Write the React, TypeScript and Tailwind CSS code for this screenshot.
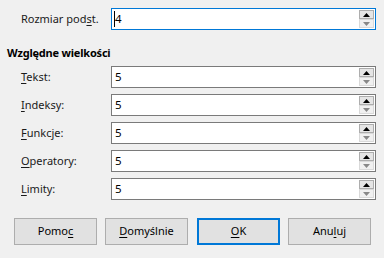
const FONT = { fontFamily: '"Noto Sans", "Open Sans", sans-serif' }

function Mn({ children }: { children: string }) {
  return <span className="underline underline-offset-2 decoration-1">{children}</span>
}

function Spin({ value, focused }: { value: string; focused?: boolean }) {
  return (
    <div
      className={`flex shrink-0 h-[22px] w-[265px] bg-white border ${
        focused ? 'border-[#0078d7]' : 'border-[#7a7a7a]'
      }`}
    >
      <div className="relative flex-1 flex items-center pl-[2px] text-[11.5px] text-black">
        {focused && <span className="absolute left-[2px] top-[2px] h-[16px] w-px bg-black" />}
        <span className="pl-px">{value}</span>
      </div>
      <div className="flex flex-col w-[16px] pt-px pr-px pb-px">
        <div className="flex-1 flex items-center justify-center bg-[#e5e5e5] border border-[#adadad]">
          <svg width="7" height="4" viewBox="0 0 7 4">
            <polygon points="0,4 7,4 3.5,0" fill="#000" />
          </svg>
        </div>
        <div className="flex-1 flex items-center justify-center bg-[#f0f0f0] border border-[#d9d9d9]">
          <svg width="7" height="4" viewBox="0 0 7 4">
            <polygon points="0,0 7,0 3.5,4" fill="#888" />
          </svg>
        </div>
      </div>
    </div>
  )
}

function Row({ label, value, focused }: { label: React.ReactNode; value: string; focused?: boolean }) {
  return (
    <div className="flex items-center h-[22px]">
      <div className="w-[111px] shrink-0 pl-[21px] whitespace-nowrap text-[11px] text-[#1a1a1a]">{label}</div>
      <Spin value={value} focused={focused} />
    </div>
  )
}

const rows: { first: string; rest: string }[] = [
  { first: 'T', rest: 'ekst:' },
  { first: 'I', rest: 'ndeksy:' },
  { first: 'F', rest: 'unkcje:' },
  { first: 'O', rest: 'peratory:' },
  { first: 'L', rest: 'imity:' },
]

function Btn({ children, primary }: { children: React.ReactNode; primary?: boolean }) {
  return (
    <button
      className={`h-[27px] w-[83px] flex items-center justify-center bg-[#e1e1e1] text-[11px] text-black ${
        primary ? 'border-2 border-[#0078d7]' : 'border border-[#adadad]'
      }`}
    >
      {children}
    </button>
  )
}

export default function App() {
  return (
    <div className="w-[384px] h-[258px] bg-[#f0f0f0] pt-[8px]" style={FONT}>
      <Row
        label={
          <>
            Rozmiar pod<Mn>s</Mn>t.
          </>
        }
        value="4"
        focused
      />
      <div className="pl-[7px] mt-[12px] h-[22px] flex items-center text-[11px] font-bold tracking-[-0.2px] text-black">
        Względne wielkości
      </div>
      <div className="flex flex-col gap-[6px] mt-[2px]">
        {rows.map(r => (
          <Row
            key={r.first}
            label={
              <>
                <Mn>{r.first}</Mn>
                {r.rest}
              </>
            }
            value="5"
          />
        ))}
      </div>
      <div className="flex mt-[18px] pl-[14px]">
        <Btn>
          Pomo<Mn>c</Mn>
        </Btn>
        <div className="ml-[8px]">
          <Btn>
            <Mn>D</Mn>omyślnie
          </Btn>
        </div>
        <div className="ml-[9px]">
          <Btn primary>
            <Mn>O</Mn>K
          </Btn>
        </div>
        <div className="ml-[8px]">
          <Btn>
            Anu<Mn>l</Mn>uj
          </Btn>
        </div>
      </div>
    </div>
  )
}
